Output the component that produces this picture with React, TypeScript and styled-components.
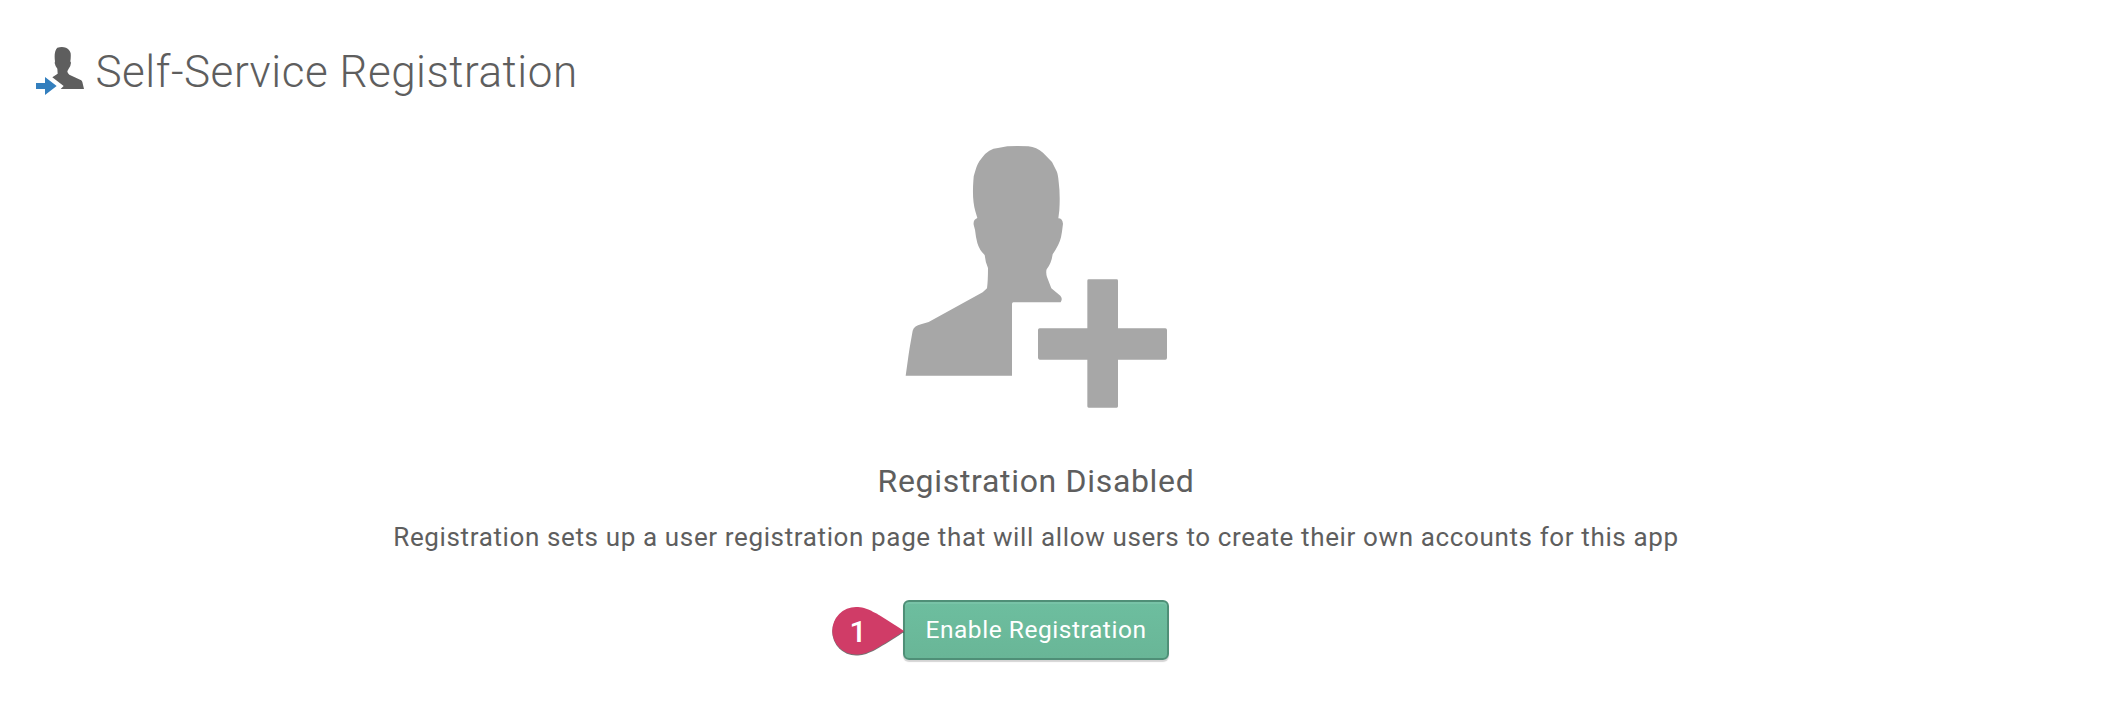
import React from "react";
import styled, { createGlobalStyle } from "styled-components";

const GlobalStyle = createGlobalStyle`
  * { box-sizing: border-box; }
  body { margin: 0; background: #fff; color: #5e5e5e; font-family: Roboto, "Liberation Sans", sans-serif; }
`;

const Page = styled.main`
  height: 721px;
  padding: 47px 39px 0 0;
  overflow: hidden;
`;

const Header = styled.header`
  display: flex;
  height: 48px;
  padding-left: 36px;
`;

const TitleIcon = styled.svg`
  width: 48px;
  height: 48px;
  flex: none;
`;

const Title = styled.h1`
  margin: 1px 0 0 11.5px;
  font-size: 44px;
  font-weight: 300;
  line-height: 48px;
  letter-spacing: 0.52px;
  white-space: nowrap;
`;

const EmptyState = styled.section`
  display: flex;
  flex-direction: column;
  align-items: center;
  margin-top: 50px;
`;

const UserPlus = styled.svg`
  width: 263px;
  height: 263px;
`;

const Heading = styled.h2`
  margin: 53px 0 0;
  font-size: 32px;
  font-weight: 400;
  line-height: 40px;
  letter-spacing: 0.68px;
  white-space: nowrap;
`;

const Description = styled.p`
  margin: 20px 0 0;
  font-size: 26px;
  line-height: 32px;
  letter-spacing: 0.63px;
  white-space: nowrap;
`;

const Action = styled.div`
  position: relative;
  margin-top: 47px;
`;

const EnableButton = styled.button`
  display: block;
  width: 266px;
  height: 60px;
  padding: 0;
  border: 2px solid #4f8f77;
  border-radius: 6px;
  background: linear-gradient(#6dbe9f, #69b697);
  box-shadow: 0 2px 1px rgba(0, 0, 0, 0.17), inset 0 2px 0 #78c3a7;
  color: #fff;
  font-family: inherit;
  font-size: 24.5px;
  line-height: 56px;
  letter-spacing: 0.55px;
  white-space: nowrap;
`;

const Marker = styled.div`
  position: absolute;
  left: -71px;
  top: 7px;
  width: 72px;
  height: 49px;
  color: #fff;
`;

const MarkerShape = styled.svg`
  display: block;
  overflow: visible;
  filter: drop-shadow(0 1px 0.7px rgba(0, 0, 0, 0.55));
`;

const MarkerNumber = styled.span`
  position: absolute;
  left: 0;
  top: 1px;
  width: 52px;
  text-align: center;
  font-size: 30px;
  font-weight: 500;
  line-height: 48px;
`;

export default function App() {
  return (
    <>
      <GlobalStyle />
      <Page>
        <Header>
          <TitleIcon viewBox="0 0 144 144" aria-hidden="true">
            <path
              fill="#5e5e5e"
              d="M64 2Q78-2 90 2Q101 7 104 19Q105 31 103 43L105 47Q104 59 98 65L94 73Q94 79 100 83L134 99Q138 101 139 105L144 126H74L83 117L49 91L65 80L64 65Q58 59 56 48L57 43Q53 13 64 2Z"
            />
            <path fill="#337fbe" d="M0 108H27V90L62 117L27 144V126H0Z" />
          </TitleIcon>
          <Title>Self-Service Registration</Title>
        </Header>
        <EmptyState>
          <UserPlus viewBox="45 42 789 789" fill="#a7a7a7" aria-hidden="true">
            <path d="M352 46Q380 44 415 46Q440 49 459 65L486 93L500 121Q504 130 506 152Q511 190 508 238L505 262Q517 262 519 278Q516 304 513 319Q508 341 488 370Q484 398 470 415Q467 424 471 438L484 472L511 494Q519 503 512 514H370Q366 514 366 519V734H47L56 670L59 650L68 599Q73 584 93 580L116 573L278 484L291 472Q294 450 294 411Q286 393 284 372Q268 357 262 336L258 318Q256 295 251 281Q249 266 262 261L256 241Q246 206 250 151Q250 133 256 119Q262 96 276 80Q296 53 324 51Z" />
            <path d="M596 445H680Q684 445 684 449V592H826Q831 592 831 597V680Q831 686 826 686H684V826Q684 830 680 830H596Q592 830 592 826V686H449Q444 685 444 680V597Q444 592 449 592H592V449Q592 445 596 445Z" />
          </UserPlus>
          <Heading>Registration Disabled</Heading>
          <Description>
            Registration sets up a user registration page that will allow users to create their own accounts for this app
          </Description>
          <Action>
            <EnableButton type="button">Enable Registration</EnableButton>
            <Marker>
              <MarkerShape width="72" height="48" viewBox="0 0 72 48">
                <path fill="#d03c67" d="M24 0C35 0 43 5 72 24C43 43 35 47.5 24 47.5A23.75 23.75 0 0 1 24 0Z" />
              </MarkerShape>
              <MarkerNumber>1</MarkerNumber>
            </Marker>
          </Action>
        </EmptyState>
      </Page>
    </>
  );
}
